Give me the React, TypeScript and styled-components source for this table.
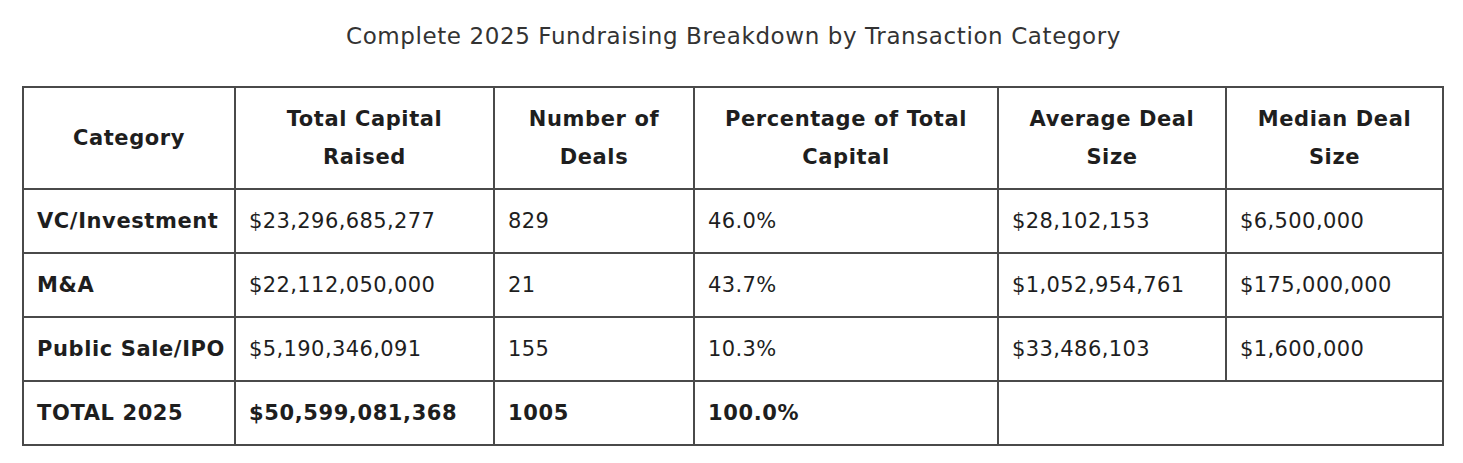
import React from 'react'
import styled, { createGlobalStyle } from 'styled-components'

const GlobalStyle = createGlobalStyle`
body {
  margin: 0;
  background: #ffffff;
  font-family: "DejaVu Sans", Inter, sans-serif;
  color: #222222;
}
`

type Row = {
  category: string
  total: string
  deals: string
  pct: string
  avg?: string
  median?: string
  isTotal?: boolean
}

const rows: Row[] = [
  { category: 'VC/Investment', total: '$23,296,685,277', deals: '829', pct: '46.0%', avg: '$28,102,153', median: '$6,500,000' },
  { category: 'M&A', total: '$22,112,050,000', deals: '21', pct: '43.7%', avg: '$1,052,954,761', median: '$175,000,000' },
  { category: 'Public Sale/IPO', total: '$5,190,346,091', deals: '155', pct: '10.3%', avg: '$33,486,103', median: '$1,600,000' },
  { category: 'TOTAL 2025', total: '$50,599,081,368', deals: '1005', pct: '100.0%', isTotal: true },
]

const colWidths = [212, 259, 200, 304, 228, 217]

const App = () => {
  return (
    <Page>
      <GlobalStyle />
      <Caption>Complete 2025 Fundraising Breakdown by Transaction Category</Caption>
      <Table>
        <colgroup>
          {colWidths.map((w, i) => (
            <col key={i} style={{ width: w }} />
          ))}
        </colgroup>
        <thead>
          <tr>
            <HeadCell>Category</HeadCell>
            <HeadCell>Total Capital<br />Raised</HeadCell>
            <HeadCell>Number of<br />Deals</HeadCell>
            <HeadCell>Percentage of Total<br />Capital</HeadCell>
            <HeadCell>Average Deal<br />Size</HeadCell>
            <HeadCell>Median Deal<br />Size</HeadCell>
          </tr>
        </thead>
        <tbody>
          {rows.map((r) => (
            <tr key={r.category}>
              <Cell $bold>{r.category}</Cell>
              <Cell $bold={r.isTotal}>{r.total}</Cell>
              <Cell $bold={r.isTotal}>{r.deals}</Cell>
              <Cell $bold={r.isTotal}>{r.pct}</Cell>
              {r.isTotal ? (
                <Cell colSpan={2} />
              ) : (
                <>
                  <Cell>{r.avg}</Cell>
                  <Cell>{r.median}</Cell>
                </>
              )}
            </tr>
          ))}
        </tbody>
      </Table>
    </Page>
  )
}

export default App

const Page = styled.div`
padding: 20px 20px 0 22px;
`
const Caption = styled.div`
text-align: center;
font-size: 23px;
letter-spacing: 0.6px;
line-height: 32px;
color: #333333;
margin-bottom: 34px;
padding-left: 2px;
`
const Table = styled.table`
border-collapse: collapse;
table-layout: fixed;
width: 1421px;
border: 2px solid #4a4a4a;
`
const HeadCell = styled.th`
border: 2px solid #4a4a4a;
padding: 12px 10px;
font-size: 21px;
letter-spacing: 0.6px;
line-height: 38px;
font-weight: 700;
text-align: center;
color: #1e1e1e;
white-space: nowrap;
`
const Cell = styled.td<{ $bold?: boolean }>`
border: 2px solid #4a4a4a;
padding: 12px 13px;
height: 38px;
font-size: 21px;
letter-spacing: ${(p) => (p.$bold ? '0.6px' : '0.4px')};
line-height: 38px;
font-weight: ${(p) => (p.$bold ? 700 : 400)};
text-align: left;
color: #1e1e1e;
white-space: nowrap;
`
